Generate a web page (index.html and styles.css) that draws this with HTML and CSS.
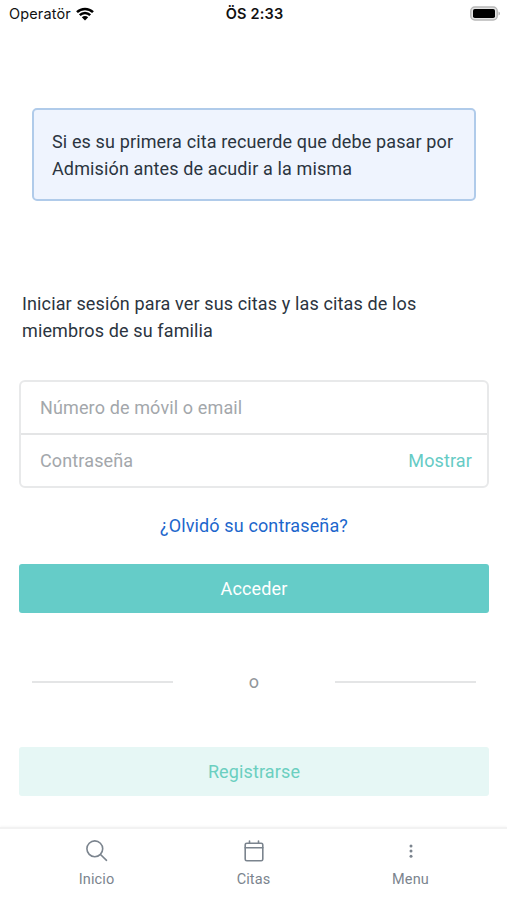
FILE: index.html
```html
<!DOCTYPE html>
<html lang="es">
<head>
  <meta charset="UTF-8" />
  <meta name="viewport" content="width=device-width, initial-scale=1.0" />
  <title>Iniciar sesión</title>
  <link rel="stylesheet" href="styles.css">
</head>
<body>
  <header class="status-bar">
    <div class="carrier">
      <span>Operatör</span>
      <svg viewBox="0 0 18 14" width="18" height="14">
        <path d="M1 5.2C5.4 .8 12.6 .8 17 5.2M3.8 8.2c2.9-2.9 7.5-2.9 10.4 0" fill="none" stroke="#000" stroke-width="2.5"/>
        <path d="M5.8 10.3c1.8-1.7 4.6-1.7 6.4 0L9 13.5z" fill="#000"/>
      </svg>
    </div>
    <div class="time">ÖS 2:33</div>
    <div class="power">
      <svg viewBox="0 0 31 15" width="31" height="15">
        <rect x=".8" y="1" width="26.4" height="13" rx="4" fill="#e4e4e4" stroke="#b8b8b8" stroke-width="1.5"/>
        <rect x="3" y="3" width="22" height="9" rx="1.8" fill="#000"/>
        <path d="M28.5 5.5v4c2-.8 2-3.2 0-4z" fill="#b5b5b5"/>
      </svg>
    </div>
  </header>

  <main class="content">
    <p class="notice">Si es su primera cita recuerde que debe pasar por Admisión antes de acudir a la misma</p>

    <p class="intro">Iniciar sesión para ver sus citas y las citas de los miembros de su familia</p>

    <form>
      <div class="fields">
        <div class="field">
          <input type="text" placeholder="Número de móvil o email">
        </div>
        <div class="field">
          <input type="password" id="password" placeholder="Contraseña">
          <button type="button" class="toggle">Mostrar</button>
        </div>
      </div>
      <a class="forgot" href="#">¿Olvidó su contraseña?</a>
      <button type="button" class="btn">Acceder</button>
      <div class="divider"><span>o</span></div>
      <button type="button" class="btn btn-light">Registrarse</button>
    </form>
  </main>

  <nav class="tabs">
    <a href="#">
      <svg viewBox="0 0 24 24" width="24" height="24">
        <circle cx="9.8" cy="9.8" r="7.9"/>
        <path d="M15.5 15.5l6 5.8"/>
      </svg>
      <span>Inicio</span>
    </a>
    <a href="#">
      <svg viewBox="0 0 24 24" width="24" height="24">
        <rect x="3.2" y="4.2" width="17.6" height="17.6" rx="1.6"/>
        <path d="M3.2 8.8h17.6M7.5 2v2.2M16.5 2v2.2"/>
      </svg>
      <span>Citas</span>
    </a>
    <a href="#">
      <svg class="dots" viewBox="0 0 24 24" width="24" height="24">
        <circle cx="12" cy="7" r="1.5"/>
        <circle cx="12" cy="12.1" r="1.5"/>
        <circle cx="12" cy="17.2" r="1.5"/>
      </svg>
      <span>Menu</span>
    </a>
  </nav>
</body>
</html>
```
FILE: styles.css
```css
* {
  margin: 0;
  padding: 0;
  box-sizing: border-box;
}

body {
  display: flex;
  flex-direction: column;
  height: 100vh;
  font-family: Roboto, sans-serif;
  font-size: 18px;
  line-height: 27px;
  letter-spacing: 0.13px;
  color: #2b3440;
  background: #fff;
}

a {
  text-decoration: none;
}

.status-bar {
  display: flex;
  align-items: center;
  height: 27px;
  padding: 0 6px 0 9px;
  font-family: Inter, sans-serif;
  font-size: 14.5px;
  color: #111;
}

.status-bar > div {
  flex: 1;
}

.carrier {
  display: flex;
  align-items: center;
  gap: 5px;
}

.time {
  padding-right: 1px;
  text-align: center;
  font-weight: 600;
  letter-spacing: 0.2px;
}

.power {
  display: flex;
  justify-content: flex-end;
}

.content {
  flex: 1;
  padding: 81px 18px 0 19px;
}

.notice {
  margin: 0 13px;
  padding: 18px 16px 17px 18px;
  border: 2px solid #b0cbea;
  border-radius: 5px;
  background: #eff4fe;
}

.intro {
  margin: 89px 3px 36px;
}

.fields {
  border: 2px solid #e8e9ea;
  border-radius: 6px;
}

.field {
  display: flex;
  align-items: center;
  height: 51px;
  padding: 0 15px 0 19px;
}

.field + .field {
  height: 53px;
  border-top: 2px solid #e4e5e6;
}

input,
button {
  font: inherit;
  letter-spacing: inherit;
  border: none;
  outline: none;
  background: none;
}

input {
  flex: 1;
  min-width: 0;
  color: #2b3440;
}

input::placeholder {
  color: #a3a7ab;
}

.toggle {
  color: #66cbc5;
}

.forgot {
  display: block;
  margin: 24px 0 25px;
  text-align: center;
  color: #1c66cc;
}

.btn {
  display: block;
  width: 100%;
  height: 49px;
  border-radius: 3px;
  color: #fff;
  background: #65ccc8;
}

.btn-light {
  color: #6bcfc0;
  background: #e6f7f5;
}

.divider {
  display: flex;
  align-items: center;
  height: 27px;
  margin: 55px 13px 52px;
  color: #92979b;
}

.divider::before,
.divider::after {
  content: "";
  width: 141px;
  height: 2px;
  background: #e4e5e6;
}

.divider span {
  flex: 1;
  text-align: center;
}

.tabs {
  display: flex;
  height: 73px;
  padding: 0 18px;
  border-top: 2px solid #f2f2f2;
  box-shadow: 0 -1px 2px rgba(0, 0, 0, 0.03);
}

.tabs a {
  flex: 1;
  display: flex;
  flex-direction: column;
  align-items: center;
  padding-top: 10px;
  font-size: 14.5px;
  color: #7b848e;
}

.tabs span {
  line-height: 20px;
  margin-top: 7px;
}

.tabs svg {
  fill: none;
  stroke: #7b848e;
  stroke-width: 1.6;
  stroke-linecap: round;
}

.tabs .dots {
  fill: #7b848e;
  stroke: none;
}
```
